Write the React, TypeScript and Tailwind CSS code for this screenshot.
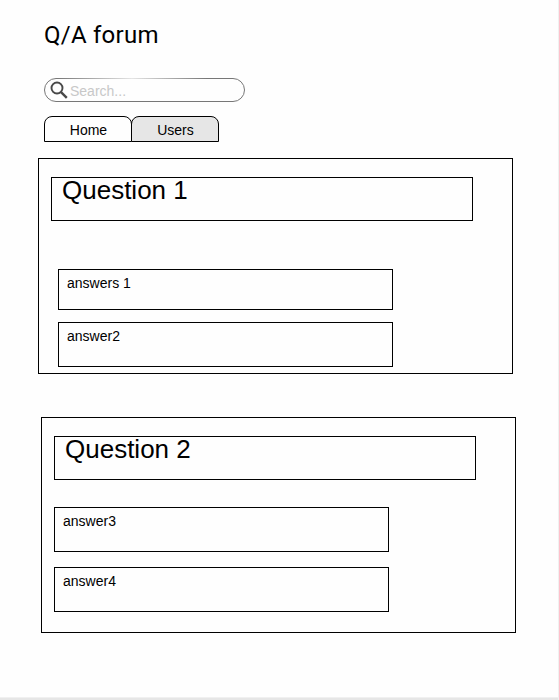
type QuestionProps = {
  title: string;
  answers: { text: string; className: string }[];
  className: string;
};

function Question({ title, answers, className }: QuestionProps) {
  return (
    <section className={`h-[216px] w-[475px] border border-black pl-3 pt-[18px] ${className}`}>
      <h2 className="h-11 w-[422px] border border-black pl-2.5 text-[26px] leading-[25px] whitespace-nowrap">
        {title}
      </h2>
      {answers.map((answer) => (
        <div
          key={answer.text}
          className={`w-[335px] border border-black pl-2 pt-[5px] text-sm leading-4 ${answer.className}`}
        >
          {answer.text}
        </div>
      ))}
    </section>
  );
}

export default function App() {
  return (
    <main className="flex h-[700px] w-[559px] flex-col items-start overflow-hidden border-r border-r-[#f0f0f0] bg-[#fefefe] font-['Liberation_Sans',Arial,sans-serif] text-black">
      <h1 className="mt-5 ml-11 h-[30px] font-[Roboto,sans-serif] text-2xl leading-[30px] tracking-[0.25px] whitespace-nowrap">
        Q/A forum
      </h1>

      <label className="relative mt-7 ml-11 flex h-6 w-[201px] rounded-full border border-[#777] pl-[5px]">
        <span className="absolute -top-px left-3 h-px w-[150px] bg-linear-to-r from-transparent via-[#e4e4e4] to-transparent" />
        <svg className="mt-[2px] h-[18px] w-[18px] shrink-0" viewBox="0 0 18 18" fill="none" stroke="#484848">
          <circle cx="7" cy="7" r="5.5" strokeWidth="1.9" />
          <path d="M10.8 10.8l6 6" strokeWidth="2.4" />
        </svg>
        <input
          className="ml-[2px] h-[22px] w-[160px] bg-transparent pt-[2px] text-sm leading-4 outline-none placeholder:text-[#c8c8c8]"
          placeholder="Search..."
        />
      </label>

      <nav className="mt-3.5 ml-11 flex text-sm leading-4">
        <button className="h-[26px] w-[88px] rounded-t-[8px] border border-black pt-px pl-px">Home</button>
        <button className="-ml-px h-[26px] w-[88px] rounded-t-[8px] border border-black bg-[#e6e6e6] pt-px pl-px">
          Users
        </button>
      </nav>

      <Question
        className="mt-4 ml-[38px]"
        title="Question 1"
        answers={[
          { text: "answers 1", className: "mt-12 ml-[7px] h-[41px]" },
          { text: "answer2", className: "mt-3 ml-[7px] h-[45px]" },
        ]}
      />
      <Question
        className="mt-[43px] ml-[41px]"
        title="Question 2"
        answers={[
          { text: "answer3", className: "mt-[27px] h-[45px]" },
          { text: "answer4", className: "mt-[15px] h-[45px]" },
        ]}
      />
      <div className="mt-auto h-[3px] w-[559px] shrink-0 border-t border-[#f0f0f0] bg-[#e6e6e6]" />
    </main>
  );
}
